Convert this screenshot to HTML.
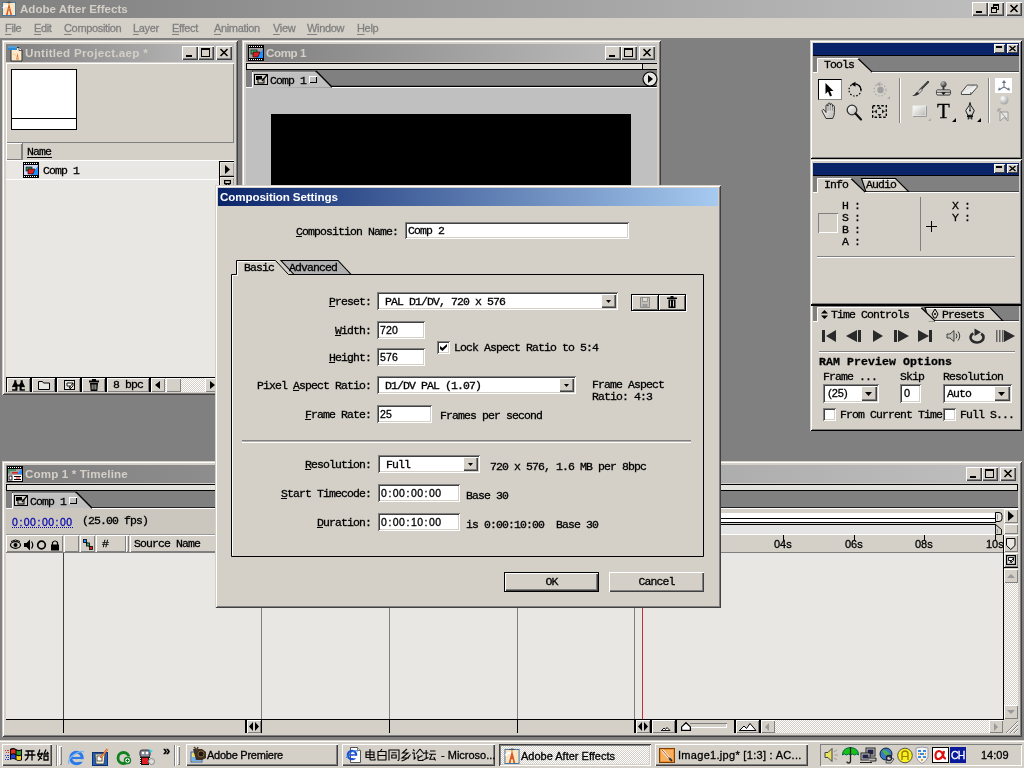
<!DOCTYPE html>
<html><head><meta charset="utf-8">
<style>
*{box-sizing:border-box;margin:0;padding:0}
html,body{width:1026px;height:768px;overflow:hidden;background:#fff}
body{position:relative;font-family:"Liberation Mono",monospace;font-size:11.5px;letter-spacing:-.9px;color:#000;line-height:12px}
#scr{will-change:transform;position:absolute;left:0;top:0;width:1024px;height:768px;background:#808080;overflow:hidden}
.a{position:absolute}
.sans{font-family:"Liberation Sans",sans-serif;letter-spacing:0}
.win{position:absolute;background:#d4d0c8;box-shadow:inset 1px 1px 0 #d4d0c8,inset -1px -1px 0 #404040,inset 2px 2px 0 #fff,inset -2px -2px 0 #808080}
.btn{position:absolute;background:#d4d0c8;box-shadow:inset 1px 1px 0 #fff,inset -1px -1px 0 #404040,inset -2px -2px 0 #808080}
.sunk{position:absolute;background:#fff;box-shadow:inset 1px 1px 0 #808080,inset -1px -1px 0 #fff,inset 2px 2px 0 #404040,inset -2px -2px 0 #d4d0c8}
.tgray{background:linear-gradient(90deg,#808080,#c0c0c0)}
.tblue{background:linear-gradient(90deg,#0a246a,#a6caf0)}
.ttl{position:absolute;font-family:"Liberation Sans",sans-serif;font-weight:bold;font-size:11.6px;letter-spacing:0;color:#d4d0c8;white-space:nowrap;line-height:14px}
.t{position:absolute;white-space:pre;-webkit-text-stroke-width:.3px}
.tc{font-family:"Liberation Sans",sans-serif;font-size:10.5px;letter-spacing:.4px;line-height:13px}
.tc i{font-style:normal;padding:0 1.15px}
u{text-decoration:underline;text-underline-offset:1px}
.cap{position:absolute;width:16px;height:14px;background:#d4d0c8;box-shadow:inset 1px 1px 0 #fff,inset -1px -1px 0 #404040,inset -2px -2px 0 #808080}
svg{position:absolute;overflow:visible}
.pal{box-shadow:inset 1px 1px 0 #d4d0c8,inset -1px -1px 0 #000,inset 2px 2px 0 #fff,inset -2px -2px 0 #808080}
.pcb{position:absolute;top:4px;width:11px;height:9px;background:#d4d0c8;box-shadow:inset 1px 1px 0 #fff,inset -1px -1px 0 #404040}
.hc{top:74px;height:17px;box-shadow:inset 1px 1px 0 #fff,inset -1px -1px 0 #808080}
.vl{top:92px;width:1px;height:166px;background:#808080}
.rl{top:77px;font-size:11px}
.tk{top:74px;width:1px;height:6px;background:#000}
.rb{background:#d4d0c8;box-shadow:inset 1px 1px 0 #fff,inset -1px -1px 0 #808080}
.bb{top:259px;height:13px;background:#d4d0c8;box-shadow:inset 1px 1px 0 #fff,inset -1px -1px 0 #808080}
.mi{top:21px;font-size:11px;color:#808080;line-height:14px;letter-spacing:-.35px}
.mi u{text-underline-offset:1.500px}
.pb{top:338px;height:14px;background:#d4d0c8;box-shadow:inset 1px 1px 0 #fff,inset -1px -1px 0 #808080}
</style></head><body>
<div id="scr">
<!--MAIN-TITLE-->
<div class="a tgray" style="left:0;top:0;width:1024px;height:18px"></div>
<svg style="left:2px;top:1px" width="14" height="15" viewBox="0 0 16 17"><rect x=".5" y="1.500" width="15" height="15" fill="#fbe6c0" stroke="#3a6ea5"/><path d="M1 8q4-5 7-1" stroke="#fff" fill="none" stroke-width="2"/><path d="M8 2.500l3.500 13.500h-2l-.7-4h-1.600l-.7 4h-2z" fill="#d8582a"/><path d="M8 0v3M5 1.500h6" stroke="#444" stroke-width=".8"/><path d="M7.200 9h1.600M6.800 11.500h2.400" stroke="#fbe6c0" stroke-width=".8"/></svg>
<div class="ttl" style="left:20px;top:2px">Adobe After Effects</div>
<div class="cap" style="left:972px;top:2px"><div class="a" style="left:4px;top:9px;width:6px;height:2px;background:#000"></div></div>
<div class="cap" style="left:988px;top:2px"><div class="a" style="left:5px;top:2px;width:6px;height:6px;border:1px solid #000;border-top-width:2px"></div><div class="a" style="left:3px;top:5px;width:6px;height:6px;border:1px solid #000;border-top-width:2px;background:#d4d0c8"></div></div>
<div class="cap" style="left:1006px;top:2px"><svg style="left:4px;top:3px" width="8" height="7" viewBox="0 0 8 7"><path d="M0.5 0l7 7M7.5 0l-7 7" stroke="#000" stroke-width="1.6"/></svg></div>
<!--MENU-->
<div class="a" style="left:0;top:18px;width:1024px;height:20px;background:#d4d0c8"></div>
<div class="t sans mi" style="left:5px"><u>F</u>ile</div><div class="t sans mi" style="left:34px"><u>E</u>dit</div><div class="t sans mi" style="left:64px"><u>C</u>omposition</div><div class="t sans mi" style="left:133px"><u>L</u>ayer</div><div class="t sans mi" style="left:172px"><u>E</u>ffect</div><div class="t sans mi" style="left:214px"><u>A</u>nimation</div><div class="t sans mi" style="left:273px"><u>V</u>iew</div><div class="t sans mi" style="left:307px"><u>W</u>indow</div><div class="t sans mi" style="left:357px"><u>H</u>elp</div>
<!--PROJECT-->
<div class="win" id="proj" style="left:2px;top:40px;width:236px;height:355px">
  <div class="a tgray" style="left:4px;top:4px;width:228px;height:18px"></div>
  <!-- icon -->
  <svg style="left:5px;top:5px" width="17" height="17" viewBox="0 0 17 17"><path d="M4 2.5h8l3 3v10.5h-11z" fill="#fbe9c8" stroke="#333" stroke-width="1"/><path d="M12 2.5v3h3" fill="#fff" stroke="#333" stroke-width=".8"/><rect x="1" y="1.500" width="9" height="3.500" fill="#2a8ad8"/><rect x="1" y="1.500" width="9" height="1" fill="#6bb8f0"/><path d="M10.5 8l1.2 6.5h-2.4z" fill="#d0602a"/><path d="M6 9c2 0 4 2 5 5" stroke="#f0c890" fill="none"/></svg>
  <div class="ttl" style="left:23px;top:6px;letter-spacing:.29px">Untitled Project.aep *</div>
  <div class="cap" style="left:180px;top:6px"><div class="a" style="left:4px;top:9px;width:6px;height:2px;background:#000"></div></div>
  <div class="cap" style="left:196px;top:6px"><div class="a" style="left:3px;top:2px;width:9px;height:9px;border:1px solid #000;border-top-width:2px"></div></div>
  <div class="cap" style="left:214px;top:6px"><svg style="left:4px;top:3px" width="8" height="7" viewBox="0 0 8 7"><path d="M0.5 0l7 7M7.5 0l-7 7" stroke="#000" stroke-width="1.6"/></svg></div>
  <!-- preview panel -->
  <div class="a" style="left:4px;top:23px;width:228px;height:80px;box-shadow:inset 1px 1px 0 #fff,inset -1px -1px 0 #808080"></div>
  <div class="a" style="left:9px;top:29px;width:66px;height:61px;background:#fff;border:1px solid #000"></div>
  <div class="a" style="left:9px;top:78px;width:66px;height:1px;background:#000"></div>
  <!-- header -->
  <div class="a" style="left:4px;top:103px;width:16px;height:17px;box-shadow:inset 1px 1px 0 #fff,inset -1px -1px 0 #808080"></div>
  <div class="a" style="left:20px;top:103px;width:1px;height:17px;background:#808080"></div>
  <div class="t" style="left:25px;top:106px">Name</div>
  <div class="a" style="left:25px;top:117px;width:25px;height:1px;background:#000"></div>
  <!-- list -->
  <div class="a" style="left:4px;top:120px;width:228px;height:217px;background:#e9e7e3"></div>
  <div class="a" style="left:4px;top:120px;width:228px;height:1px;background:#fff"></div>
  <div class="a" style="left:4px;top:139px;width:228px;height:1px;background:#fff"></div>
  <svg style="left:21px;top:122px" width="16" height="16" viewBox="0 0 16 16"><rect width="16" height="16" fill="#000"/><rect x="1" y="3" width="14" height="10" fill="#d8d8f8"/><g fill="#fff"><rect x="1" y="1" width="1" height="1"/><rect x="3" y="1" width="1" height="1"/><rect x="5" y="1" width="1" height="1"/><rect x="7" y="1" width="1" height="1"/><rect x="9" y="1" width="1" height="1"/><rect x="11" y="1" width="1" height="1"/><rect x="13" y="1" width="1" height="1"/><rect x="1" y="14" width="1" height="1"/><rect x="3" y="14" width="1" height="1"/><rect x="5" y="14" width="1" height="1"/><rect x="7" y="14" width="1" height="1"/><rect x="9" y="14" width="1" height="1"/><rect x="11" y="14" width="1" height="1"/><rect x="13" y="14" width="1" height="1"/></g><path d="M15 4v9h-7z" fill="#1e90ff"/><rect x="3" y="5" width="6" height="4" fill="#2e8b57" stroke="#000" stroke-width=".6"/><path d="M5 7h7l-2 5h-5z" fill="#e02020" stroke="#000" stroke-width=".6"/></svg>
  <div class="t" style="left:41px;top:125px">Comp 1</div>
  <!-- right arrow + scroll piece -->
  <div class="a" style="left:217px;top:121px;width:15px;height:30px;background:#000"></div>
  <div class="a" style="left:218px;top:122px;width:14px;height:14px;background:#d4d0c8;box-shadow:inset 1px 1px 0 #ece9e4,inset -1px -1px 0 #a0a0a0"><svg style="left:5px;top:3px" width="5" height="9" viewBox="0 0 5 9"><path d="M0 0l5 4.500l-5 4.500z" fill="#000"/></svg></div>
  <div class="a" style="left:218px;top:137px;width:14px;height:14px;background:#d4d0c8;box-shadow:inset 1px 1px 0 #ece9e4,inset -1px -1px 0 #a0a0a0"><svg style="left:4px;top:3px" width="7" height="6" viewBox="0 0 7 6"><rect x=".6" y=".6" width="5.800" height="3" fill="none" stroke="#000" stroke-width="1.200"/><path d="M1 6l2-2.400M6 6l-2-2.400" stroke="#000" stroke-width="1.200"/></svg></div>
  <!-- bottom toolbar -->
  <div class="a" style="left:4px;top:337px;width:228px;height:15px;background:#000"></div>
  <div class="a pb" style="left:5px;width:23px"><svg style="left:3px;top:2px" width="17" height="11" viewBox="0 0 16 10"><path d="M4 0h2v2l1 2h2l1-2v-2h2v2l2 4v4h-5v-4h-2v4h-5v-4l2-4z" fill="#000"/><rect x="2" y="6.5" width="3" height="2" fill="#d4d0c8"/><rect x="11" y="6.5" width="3" height="2" fill="#d4d0c8"/></svg></div>
  <div class="a pb" style="left:30px;width:23px"><svg style="left:6px;top:3px" width="12" height="9" viewBox="0 0 12 9"><path d="M0.5 8.5v-8h4l1 1.5h6v6.5z" fill="#e8e6e0" stroke="#000"/></svg></div>
  <div class="a pb" style="left:55px;width:23px"><svg style="left:7px;top:2px" width="11" height="10" viewBox="0 0 11 10"><rect x=".5" y=".5" width="10" height="9" fill="#e8e6e0" stroke="#000"/><path d="M3 3h6v3l-3 3v-3h-3z" fill="#fff" stroke="#000" stroke-width=".9"/><path d="M9 3l-4 5" stroke="#000" stroke-width=".9"/></svg></div>
  <div class="a pb" style="left:80px;width:23px"><svg style="left:7px;top:1px" width="10" height="12" viewBox="0 0 10 12"><path d="M3 0h4v1.5h3v2h-10v-2h3z" fill="#000"/><path d="M1 4h8l-.7 8h-6.600z" fill="#000"/><path d="M3.2 5.500v5M5 5.500v5M6.800 5.500v5" stroke="#d4d0c8" stroke-width=".9"/></svg></div>
  <div class="a pb" style="left:105px;width:42px"><div class="t" style="left:6px;top:1px">8 bpc</div></div>
  <div class="a pb" style="left:149px;width:14px"><svg style="left:4px;top:3px" width="5" height="8" viewBox="0 0 5 8"><path d="M5 0v8l-5-4z" fill="#000"/></svg></div>
  <div class="a" style="left:163px;top:338px;width:51px;height:14px;background:#e9e7e3;background-image:conic-gradient(#fff 25%,#d4d0c8 0 50%,#fff 0 75%,#d4d0c8 0);background-size:2px 2px"></div>
  <div class="a pb" style="left:164px;width:15px"></div>
  <div class="a pb" style="left:203px;width:14px"><svg style="left:5px;top:3px" width="5" height="8" viewBox="0 0 5 8"><path d="M0 0v8l5-4z" fill="#000"/></svg></div>
</div>
<!--COMP-->
<div class="win" id="comp" style="left:242px;top:40px;width:419px;height:300px">
  <div class="a tgray" style="left:4px;top:4px;width:411px;height:18px"></div>
  <svg style="left:6px;top:5px" width="16" height="16" viewBox="0 0 16 16"><rect width="16" height="16" fill="#000"/><rect x="1" y="3" width="14" height="10" fill="#a0a0a0"/><g fill="#fff"><rect x="1" y="1" width="1" height="1"/><rect x="3" y="1" width="1" height="1"/><rect x="5" y="1" width="1" height="1"/><rect x="7" y="1" width="1" height="1"/><rect x="9" y="1" width="1" height="1"/><rect x="11" y="1" width="1" height="1"/><rect x="13" y="1" width="1" height="1"/><rect x="1" y="14" width="1" height="1"/><rect x="3" y="14" width="1" height="1"/><rect x="5" y="14" width="1" height="1"/><rect x="7" y="14" width="1" height="1"/><rect x="9" y="14" width="1" height="1"/><rect x="11" y="14" width="1" height="1"/><rect x="13" y="14" width="1" height="1"/></g><path d="M15 4v9h-7z" fill="#1e90ff"/><rect x="3" y="5" width="6" height="4" fill="#3cb371" stroke="#000" stroke-width=".6"/><path d="M5 7h7l-2 5h-5z" fill="#e02020" stroke="#000" stroke-width=".6"/></svg>
  <div class="ttl" style="left:24px;top:6px;letter-spacing:-.4px">Comp 1</div>
  <div class="cap" style="left:363px;top:6px"><div class="a" style="left:4px;top:9px;width:6px;height:2px;background:#000"></div></div>
  <div class="cap" style="left:379px;top:6px"><div class="a" style="left:3px;top:2px;width:9px;height:9px;border:1px solid #000;border-top-width:2px"></div></div>
  <div class="cap" style="left:397px;top:6px"><svg style="left:4px;top:3px" width="8" height="7" viewBox="0 0 8 7"><path d="M0.5 0l7 7M7.5 0l-7 7" stroke="#000" stroke-width="1.6"/></svg></div>
  <!-- strip -->
  <div class="a" style="left:4px;top:23px;width:411px;height:7px;background:linear-gradient(90deg,#e4e2dc 395px,#000 395px 396px,#d4d0c8 396px);border:1px solid #000;border-right:0"></div>
  <!-- tab row -->
  <div class="a" style="left:4px;top:30px;width:411px;height:18px;background:#808080"></div>
  <div class="a" style="left:4px;top:48px;width:411px;height:252px;background:#c0c0c0"></div>
  <svg style="left:4px;top:30px" width="411" height="18" viewBox="0 0 411 18"><path d="M6.5 18v-16.500h64l15 16z" fill="#c0c0c0"/><path d="M6 1.500h64.500l15 15h325" stroke="#000" fill="none" stroke-width="1.300"/><path d="M0 17.500h6.500v-15.500h63" stroke="#fff" fill="none"/><path d="M86 17.500h325" stroke="#fff"/></svg>
  <svg style="left:12px;top:34px" width="14" height="11" viewBox="0 0 14 11"><rect x=".5" y=".5" width="13" height="10" fill="#d4d0c8" stroke="#000"/><rect x="2" y="2" width="6" height="4" fill="#000"/><rect x="4" y="5" width="6" height="4" fill="#d4d0c8" stroke="#000" stroke-width="1"/><path d="M13 1l-5 6" stroke="#000" stroke-width="1.2"/></svg>
  <div class="t" style="left:28px;top:35px">Comp 1</div>
  <div class="a" style="left:67px;top:36px;width:8px;height:7px;background:#c0c0c0;box-shadow:inset 1px 1px 0 #fff,inset -1px -1px 0 #000"></div>
  <svg style="left:400px;top:31px" width="16" height="16" viewBox="0 0 16 16"><circle cx="8" cy="8" r="7" fill="#e8e6e2" stroke="#000" stroke-width="1.200"/><path d="M6 4l5 4l-5 4z" fill="#000"/></svg>
  <!-- black comp -->
  <div class="a" style="left:29px;top:74px;width:360px;height:226px;background:#000"></div>
</div>
<!--TOOLS-->
<svg width="0" height="0" style="left:0;top:0"><defs>
<linearGradient id="gw" x1="0" y1="0" x2="1" y2="1"><stop offset="0" stop-color="#fff"/><stop offset="1" stop-color="#b8b6b0"/></linearGradient>
<filter id="blr" x="-10%" y="-20%" width="120%" height="140%"><feGaussianBlur stdDeviation=".45"/></filter>
<radialGradient id="gb" cx=".35" cy=".3" r=".8"><stop offset="0" stop-color="#fff"/><stop offset="1" stop-color="#999"/></radialGradient>
<radialGradient id="gk" cx=".35" cy=".3" r=".8"><stop offset="0" stop-color="#bbb"/><stop offset="1" stop-color="#222"/></radialGradient>
</defs></svg>
<div class="win pal" id="tools" style="left:810px;top:40px;width:212px;height:119px">
  <div class="a" style="left:3px;top:3px;width:206px;height:12px;background:#0a246a"></div>
  <div class="pcb" style="left:184px"><div class="a" style="left:2px;top:2px;width:6px;height:2px;background:#000"></div></div>
  <div class="pcb" style="left:197px"><svg style="left:2px;top:2px" width="7" height="5" viewBox="0 0 7 5"><path d="M0.500 0l6 5M6.500 0l-6 5" stroke="#000" stroke-width="1.500"/></svg></div>
  <div class="a" style="left:3px;top:15px;width:206px;height:17px;background:#808080;border-top:1px solid #000"></div>
  <svg style="left:3px;top:16px" width="206" height="17" viewBox="0 0 206 17"><path d="M4.500 17v-14.500h41l14 14z" fill="#d4d0c8"/><path d="M45 2.500l14 13.500h147" stroke="#000" fill="none" stroke-width="1.200"/><path d="M0 16.500h4.500v-14h41" stroke="#fff" fill="none"/><path d="M59 16.500h147" stroke="#fff"/></svg>
  <div class="t" style="left:14px;top:19px">Tools</div>
  <!-- selection -->
  <div class="a" style="left:8px;top:39px;width:24px;height:21px;background:#fff;border:1px solid #000;border-right-color:#888;border-bottom-color:#888"></div>
  <svg style="left:15px;top:43px" width="10" height="14" viewBox="0 0 10 14"><path d="M0.500 0v11l2.500-2.500l2 5l2-1l-2-4.500h3.500z" fill="#000"/></svg>
  <!-- rotate -->
  <svg style="left:37px;top:41px" width="16" height="16" viewBox="0 0 16 16"><circle cx="8" cy="9" r="6" fill="none" stroke="#000" stroke-width="1.200" stroke-dasharray="1.500 1.700"/><path d="M8 3a6 6 0 0 1 6 6" stroke="#000" fill="none" stroke-width="1.200"/><path d="M4 3.200l4.500-2.500v5z" fill="#000"/></svg>
  <!-- orbit (disabled) -->
  <svg style="left:62px;top:41px" width="16" height="16" viewBox="0 0 16 16"><circle cx="8" cy="9" r="6" fill="none" stroke="#aaa" stroke-width="1.200" stroke-dasharray="1.500 1.700"/><circle cx="8.500" cy="9" r="3.200" fill="#a0a0a0"/><path d="M4 3.200l4.500-2.500v5z" fill="#aaa"/><path d="M80 59v-3l-3 3z" fill="#aaa" transform="translate(-62,-41)"/></svg>
  <!-- hand -->
  <svg style="left:11px;top:62px" width="17" height="17" viewBox="0 0 17 17"><path d="M5 16.500l-3.500-6.500q-1-2 .5-2.500q1-.3 2 1.500l1 1.500v-6.500q0-1.300 1-1.300t1 1.300v-1.700q0-1.300 1.100-1.300t1.100 1.300v.7q0-1.300 1.100-1.300t1.100 1.300v1.700q0-1.200 1-1.200t1 1.200v5.800q0 3-1.700 6z" fill="url(#gw)" stroke="#222" stroke-width=".9"/><path d="M7 4v4.500M9.200 3v5.500M11.400 4v4.500" stroke="#666" stroke-width=".7"/></svg>
  <!-- zoom -->
  <svg style="left:36px;top:64px" width="17" height="17" viewBox="0 0 17 17"><circle cx="6" cy="6" r="4.800" fill="url(#gw)" stroke="#333" stroke-width="1.300"/><path d="M9.500 9.500l5.500 6" stroke="#111" stroke-width="2.200" stroke-linecap="round"/></svg>
  <!-- pan behind -->
  <svg style="left:62px;top:65px" width="15" height="13" viewBox="0 0 15 13"><rect x=".7" y=".7" width="13.600" height="11.600" fill="none" stroke="#000" stroke-width="1.400" stroke-dasharray="2.500 1.800"/><path d="M7.500 1.500l2 2.500h-4zM7.500 11.500l2-2.500h-4zM2 6.500l3-2v4zM13 6.500l-3-2v4z" fill="#222"/></svg>
  <!-- separators -->
  <div class="a" style="left:89px;top:38px;width:2px;height:45px;background:#808080;border-right:1px solid #fff"></div>
  <div class="a" style="left:178px;top:38px;width:2px;height:45px;background:#808080;border-right:1px solid #fff"></div>
  <!-- brush -->
  <svg style="left:101px;top:41px" width="18" height="16" viewBox="0 0 18 16"><path d="M17 1l-7.500 7.500" stroke="#2a2a2a" stroke-width="2.200" stroke-linecap="round"/><path d="M16.500 1l-7 7" stroke="#888" stroke-width=".6"/><path d="M10 7.500l1.500 1.500l-4 4l-2.500-.5z" fill="#d8d6d0" stroke="#444" stroke-width=".8"/><path d="M6 11q2 .5 2 2q-3 2.500-7 2q2.500-1 5-4z" fill="#2a2a2a"/></svg>
  <!-- stamp -->
  <svg style="left:126px;top:40px" width="15" height="17" viewBox="0 0 16 17"><circle cx="8" cy="4" r="3.200" fill="url(#gk)"/><rect x="7" y="6" width="2" height="4" fill="#333"/><path d="M1.500 10h13c1 0 1 1 1 1.500v2.500c0 1-1 1.500-1.500 1.500h-12c-1 0-1.500-.500-1.500-1.500v-2.500c0-1 .5-1.500 1-1.500z" fill="url(#gw)" stroke="#333" stroke-width="1"/><path d="M1 12.500h14" stroke="#333"/><path d="M5.500 12.500h5l-2.500 3z" fill="#111"/></svg>
  <!-- eraser -->
  <svg style="left:151px;top:44px" width="17" height="12" viewBox="0 0 19 13"><path d="M7 1h11l-7 8h-10.500z" fill="url(#gw)" stroke="#333" stroke-width="1"/><path d="M.5 9v2.500h10.500l7-8v-2.500" fill="#eee" stroke="#333" stroke-width="1"/><path d="M11 9v2.500" stroke="#333"/></svg>
  <!-- rect -->
  <svg style="left:102px;top:65px" width="22" height="19" viewBox="0 0 22 19"><rect x="1" y="1" width="13" height="10" fill="url(#gw)" stroke="#eee" stroke-width="1"/><path d="M14.500 1v10.500h-13.500" stroke="#999" fill="none"/><path d="M19 16v-3l-3 3z" fill="#aaa"/></svg>
  <!-- T -->
  <div class="t" style="left:127px;top:60px;font:21px/22px 'Liberation Serif',serif;letter-spacing:0">T</div>
  <svg style="left:142px;top:78px" width="4" height="4" viewBox="0 0 4 4"><path d="M4 0v4h-4z" fill="#000"/></svg>
  <!-- pen -->
  <svg style="left:154px;top:62px" width="12" height="18" viewBox="0 0 14 20"><path d="M7 0l1 3.500l4 6l-2.500 5.500h-5l-2.500-5.500l4-6z" fill="url(#gw)" stroke="#111" stroke-width="1.100"/><path d="M7 3v6" stroke="#111"/><circle cx="7" cy="9.500" r="1.100" fill="#111"/><rect x="3.500" y="15" width="7" height="2" fill="#111"/><path d="M5 17v3M9 17v3M7 17v2" stroke="#111" stroke-width="1.300"/></svg>
  <svg style="left:167px;top:78px" width="4" height="4" viewBox="0 0 4 4"><path d="M4 0v4h-4z" fill="#000"/></svg>
  <!-- right column -->
  <div class="a" style="left:185px;top:38px;width:17px;height:15px;background:#fff"></div>
  <svg style="left:188px;top:40px" width="12" height="12" viewBox="0 0 12 12"><path d="M6 1.500v5.500M6 7l-4.500 2.500M6 7l4.500 2.500" stroke="#6a7488" fill="none" stroke-width="1.100"/><path d="M6 0l-2.200 3h4.400zM0 10.500l1-3.200l2 2.600zM12 10.500l-1-3.200l-2 2.600z" fill="#6a7488"/></svg>
  <svg style="left:189px;top:55px" width="10" height="10" viewBox="0 0 10 10"><circle cx="5" cy="5" r="4.500" fill="url(#gb)"/></svg>
  <svg style="left:188px;top:69px" width="11" height="12" viewBox="0 0 11 12"><path d="M2 3h8v9l-4-3.500l-4 3.500z" fill="#e8e6e2" stroke="#999" stroke-width="1"/><path d="M0 0h3M0 0v3M1 1l8 9" stroke="#999" stroke-width="1"/></svg>
</div>
<!--INFO-->
<div class="win pal" id="info" style="left:810px;top:159px;width:212px;height:146px">
  <div class="a" style="left:3px;top:4px;width:206px;height:12px;background:#0a246a"></div>
  <div class="pcb" style="left:184px;top:5px"><div class="a" style="left:2px;top:2px;width:6px;height:2px;background:#000"></div></div>
  <div class="pcb" style="left:197px;top:5px"><svg style="left:2px;top:2px" width="7" height="5" viewBox="0 0 7 5"><path d="M0.500 0l6 5M6.500 0l-6 5" stroke="#000" stroke-width="1.500"/></svg></div>
  <div class="a" style="left:3px;top:16px;width:206px;height:17px;background:#808080;border-top:1px solid #000"></div>
  <svg style="left:3px;top:17px" width="206" height="17" viewBox="0 0 206 17"><path d="M48.500 2.500h34l13.500 13.500h-43z" fill="#d4d0c8" stroke="#000" stroke-width="1.100"/><path d="M50 3.500h32" stroke="#fff"/><path d="M4.500 17v-14.500h34l14 14z" fill="#d4d0c8"/><path d="M38 2.500l14 13.500h154" stroke="#000" fill="none" stroke-width="1.200"/><path d="M0 16.500h4.500v-14h34" stroke="#fff" fill="none"/><path d="M52 16.500h154" stroke="#fff"/></svg>
  <div class="t" style="left:14px;top:20px">Info</div>
  <div class="t" style="left:56px;top:20px">Audio</div>
  <div class="a" style="left:8px;top:54px;width:20px;height:20px;box-shadow:inset 1px 1px 0 #808080,inset -1px -1px 0 #fff"></div>
  <div class="t" style="left:32px;top:41px;line-height:12px;white-space:pre">H :<br>S :<br>B :<br>A :</div>
  <div class="a" style="left:110px;top:38px;width:1px;height:54px;background:#808080"></div>
  <div class="a" style="left:116px;top:67px;width:11px;height:1px;background:#000"></div>
  <div class="a" style="left:121px;top:62px;width:1px;height:11px;background:#000"></div>
  <div class="t" style="left:142px;top:41px;line-height:12px;white-space:pre">X :<br>Y :</div>
  <div class="a" style="left:7px;top:97px;width:198px;height:2px;background:#808080;border-bottom:1px solid #fff"></div>
</div>
<!--TIMECTL-->
<div class="win pal" id="tc" style="left:810px;top:304px;width:212px;height:127px;box-shadow:inset 1px 0 0 #d4d0c8,inset 0 2px 0 #000,inset -1px -1px 0 #000,inset 2px 0 0 #fff,inset -2px -2px 0 #808080">
  <div class="a" style="left:3px;top:2px;width:206px;height:15px;background:#808080"></div>
  <svg style="left:3px;top:1px" width="206" height="17" viewBox="0 0 206 17"><path d="M112 2.500h65l13 13.500h-74z" fill="#d4d0c8" stroke="#000" stroke-width="1.100"/><path d="M114 3.500h63" stroke="#fff"/><path d="M4.500 17v-14.500h104l14 14z" fill="#d4d0c8"/><path d="M108 2.500l14 13.500h84" stroke="#000" fill="none" stroke-width="1.200"/><path d="M0 16.500h4.500v-14h104" stroke="#fff" fill="none"/><path d="M122 16.500h84" stroke="#fff"/></svg>
  <svg style="left:11px;top:6px" width="7" height="9" viewBox="0 0 7 9"><path d="M0 3.500h7l-3.500-3.500zM0 5.500h7l-3.500 3.500z" fill="#000"/></svg>
  <div class="t" style="left:21px;top:5px">Time Controls</div>
  <svg style="left:121px;top:5px" width="8" height="10" viewBox="0 0 8 10"><path d="M4 0l3 5l-2 4h-2l-2-4z" fill="none" stroke="#000" stroke-width="1"/><circle cx="4" cy="5" r="1" fill="#000"/></svg>
  <div class="t" style="left:132px;top:5px">Presets</div>
  <!-- transport -->
  <svg style="left:12px;top:26px" width="195" height="13" viewBox="0 0 195 13" fill="#2a2a2a"><g filter="url(#blr)"><rect x="0" y="0" width="3" height="12"/><path d="M14 0v12l-10-6z"/><path d="M35 0v12l-11-6z"/><rect x="36" y="0" width="3" height="12"/><path d="M51 0v12l10-6z"/><rect x="72" y="0" width="3" height="12"/><path d="M76 0v12l11-6z"/><path d="M96 0v12l11-6z"/><rect x="107" y="0" width="3" height="12"/><g fill="#666"><rect x="174" y="0" width="1.500" height="12"/><rect x="177" y="0" width="1.500" height="12"/><rect x="180" y="0" width="1.500" height="12"/></g><path d="M182 0v12l11-6z"/></g><path d="M125 4h3l4-3.500v11l-4-3.500h-3z" fill="#c4c0b8" stroke="#333" stroke-width=".9"/><path d="M134 3.500q2 2.500 0 5M136 1.500q3.500 4.500 0 9" stroke="#333" fill="none" stroke-width="1"/><g filter="url(#blr)"><path d="M159.200 3.670A6.500 5 0 1 1 151.300 3.400" stroke="#2a2a2a" fill="none" stroke-width="2.600"/><path d="M152.500 -1.500v7.500l6.500-3.700z" fill="#2a2a2a"/></g></svg>
  <div class="a" style="left:9px;top:47px;width:196px;height:1px;background:#808080;border-bottom:1px solid #fff;height:2px"></div>
  <div class="t" style="left:9px;top:52px;font-weight:bold;letter-spacing:.1px">RAM Preview Options</div>
  <div class="t" style="left:13px;top:67px">Frame ...</div>
  <div class="t" style="left:90px;top:67px">Skip</div>
  <div class="t" style="left:133px;top:67px">Resolution</div>
  <div class="sunk" style="left:13px;top:80px;width:56px;height:19px"><div class="t sans" style="left:5px;top:3px;font-size:11px">(25)</div><div class="btn" style="left:38px;top:2px;width:16px;height:15px"><svg style="left:4px;top:6px" width="7" height="4" viewBox="0 0 7 4"><path d="M0 0h7l-3.500 4z" fill="#000"/></svg></div></div>
  <div class="sunk" style="left:90px;top:80px;width:21px;height:19px"><div class="t sans" style="left:4px;top:3px;font-size:11px">0</div></div>
  <div class="sunk" style="left:133px;top:80px;width:69px;height:19px"><div class="t" style="left:4px;top:4px">Auto</div><div class="btn" style="left:51px;top:2px;width:16px;height:15px"><svg style="left:4px;top:6px" width="7" height="4" viewBox="0 0 7 4"><path d="M0 0h7l-3.500 4z" fill="#000"/></svg></div></div>
  <div class="sunk" style="left:13px;top:104px;width:13px;height:13px"></div>
  <div class="t" style="left:30px;top:105px">From Current Time</div>
  <div class="sunk" style="left:133px;top:104px;width:13px;height:13px"></div>
  <div class="t" style="left:150px;top:105px">Full S...</div>
</div>
<!--TIMELINE-->
<div class="win" id="tl" style="left:2px;top:461px;width:1020px;height:276px">
  <div class="a tgray" style="left:4px;top:4px;width:1012px;height:18px"></div>
  <svg style="left:5px;top:5px" width="16" height="16" viewBox="0 0 16 16"><rect width="16" height="16" fill="#000"/><g fill="#fff"><rect x="1" y="1" width="1" height="1"/><rect x="3" y="1" width="1" height="1"/><rect x="5" y="1" width="1" height="1"/><rect x="7" y="1" width="1" height="1"/><rect x="9" y="1" width="1" height="1"/><rect x="11" y="1" width="1" height="1"/><rect x="13" y="1" width="1" height="1"/></g><rect x="1" y="3" width="14" height="6" fill="#a0a0a0"/><path d="M15 3v5h-5z" fill="#1e90ff"/><path d="M2 7v-3h7" stroke="#2e8b57" fill="none" stroke-width="1.300"/><rect x="5" y="6" width="6" height="1.500" fill="#e02020"/><rect x="1" y="9" width="14" height="6" fill="#fff"/><rect x="2" y="10" width="3" height="4" fill="none" stroke="#000" stroke-width=".9"/><path d="M7 10.500h7M7 13.500h7" stroke="#000"/><path d="M9 12h4" stroke="#e02020"/></svg>
  <div class="ttl" style="left:23px;top:6px;letter-spacing:.15px">Comp 1 * Timeline</div>
  <div class="cap" style="left:964px;top:6px"><div class="a" style="left:4px;top:9px;width:6px;height:2px;background:#000"></div></div>
  <div class="cap" style="left:980px;top:6px"><div class="a" style="left:3px;top:2px;width:9px;height:9px;border:1px solid #000;border-top-width:2px"></div></div>
  <div class="cap" style="left:998px;top:6px"><svg style="left:4px;top:3px" width="8" height="7" viewBox="0 0 8 7"><path d="M0.5 0l7 7M7.5 0l-7 7" stroke="#000" stroke-width="1.6"/></svg></div>
  <!-- strip -->
  <div class="a" style="left:4px;top:23px;width:1012px;height:7px;background:#e4e2dc;border:1px solid #000"></div>
  <!-- tab row -->
  <div class="a" style="left:4px;top:30px;width:1012px;height:17px;background:#808080"></div>
  <svg style="left:4px;top:30px" width="1012" height="18" viewBox="0 0 1012 18"><path d="M6.5 18v-16.500h64l15 16z" fill="#c0c0c0"/><path d="M6 1.500h64.500l15.500 15.500h926" stroke="#000" fill="none" stroke-width="1.300"/><path d="M0 17.500h6.500v-15.500h63" stroke="#fff" fill="none"/><path d="M86 17.500h926" stroke="#fff"/></svg>
  <svg style="left:12px;top:34px" width="14" height="11" viewBox="0 0 14 11"><rect x=".5" y=".5" width="13" height="10" fill="#d4d0c8" stroke="#000"/><rect x="2" y="2" width="6" height="4" fill="#000"/><rect x="4" y="5" width="6" height="4" fill="#d4d0c8" stroke="#000" stroke-width="1"/><path d="M13 1l-5 6" stroke="#000" stroke-width="1.2"/></svg>
  <div class="t" style="left:28px;top:35px">Comp 1</div>
  <div class="a" style="left:67px;top:36px;width:8px;height:7px;background:#c0c0c0;box-shadow:inset 1px 1px 0 #fff,inset -1px -1px 0 #000"></div>
  <!-- timecode row -->
  <div class="a" style="left:4px;top:48px;width:628px;height:26px;background:#cbc7bf;border-bottom:1px solid #9a9a9a"></div>
  <div class="t tc" style="left:10px;top:55px;color:#0a0ab0">0<i>:</i>00<i>:</i>00<i>:</i>00</div>
  <div class="a" style="left:10px;top:66px;width:61px;height:1px;background-image:linear-gradient(90deg,#0a0ab0 50%,transparent 0);background-size:2px 1px"></div>
  <div class="t" style="left:80px;top:54px">(25.00 fps)</div>
  <!-- header row -->
  <div class="a" style="left:4px;top:74px;width:1012px;height:18px;background:#d4d0c8"></div>
  <div class="a hc" style="left:4px;width:57px"></div>
  <div class="a hc" style="left:62px;width:15px"></div>
  <div class="a hc" style="left:78px;width:15px"></div>
  <div class="a hc" style="left:94px;width:30px"></div>
  <div class="a hc" style="left:124px;width:3px"></div>
  <div class="a hc" style="left:128px;width:500px"></div>
  <svg style="left:8px;top:78px" width="50" height="12" viewBox="0 0 50 12"><ellipse cx="5.500" cy="6" rx="5" ry="3.300" fill="none" stroke="#000" stroke-width="1.200"/><circle cx="5.500" cy="6" r="2" fill="#000"/><path d="M1 2.500q4.500-3 9 0" stroke="#000" fill="none"/><path d="M14 4h2.500l3.500-3.500v11l-3.500-3.500h-2.500z" fill="#000"/><path d="M21.500 2.500q2.500 3.500 0 7" stroke="#000" fill="none" stroke-width="1.200"/><circle cx="31.500" cy="6" r="3.800" fill="none" stroke="#000" stroke-width="1.700"/><rect x="41" y="5.500" width="8" height="6" fill="#000"/><path d="M42.500 6v-2.500q2.500-3 5 0v2.500" stroke="#000" fill="none" stroke-width="1.200"/></svg>
  <svg style="left:81px;top:78px" width="10" height="11" viewBox="0 0 10 11"><path d="M2 2l3 3.500l3 3.500" stroke="#000" stroke-width="1.300" fill="none"/><rect x=".5" y=".5" width="3" height="3" fill="#1e90ff" stroke="#000" stroke-width=".8"/><rect x="3.500" y="4" width="3" height="3" fill="#3cb371" stroke="#000" stroke-width=".8"/><rect x="6.500" y="7.500" width="3" height="3" fill="#e02020" stroke="#000" stroke-width=".8"/></svg>
  <div class="t" style="left:100px;top:77px">#</div>
  <div class="t" style="left:132px;top:77px">Source Name</div>
  <!-- body -->
  <div class="a" style="left:4px;top:92px;width:998px;height:166px;background:#e9e7e3"></div>
  <div class="a" style="left:61px;top:92px;width:1px;height:180px;background:#404040"></div>
  <div class="a vl" style="left:259px"></div><div class="a vl" style="left:387px"></div><div class="a vl" style="left:515px"></div><div class="a vl" style="left:632px"></div>
  <div class="a" style="left:640px;top:92px;width:1px;height:166px;background:#c83030"></div>
  <!-- time nav (right of dialog) -->
  <div class="a" style="left:632px;top:48px;width:370px;height:26px;background:#d4d0c8"></div>
  <div class="a" style="left:632px;top:52px;width:362px;height:6px;background:#fff;border-bottom:1px solid #000"></div>
  <div class="a" style="left:632px;top:58px;width:362px;height:4px;background:#fff;border-bottom:1px solid #000"></div>
  <div class="a" style="left:632px;top:63px;width:362px;height:11px;background:#e4e4e4;border-top:1px solid #000;border-bottom:1px solid #fff"></div>
  <svg style="left:993px;top:51px" width="8" height="23" viewBox="0 0 8 23"><path d="M.5 .5h3.500q3 0 3 3v3q0 3-3 3h-3.500z" fill="#e8e6e2" stroke="#000"/><path d="M2.500 2.500v5" stroke="#999"/><path d="M.5 12.500l6 5v5h-6z" fill="#d4d0c8" stroke="#000" stroke-width=".9"/><path d="M2.500 17v4" stroke="#999"/></svg>
  <div class="a" style="left:4px;top:91px;width:998px;height:1px;background:#808080"></div>
  <!-- ruler labels -->
  <div class="a" style="left:632px;top:74px;width:370px;height:17px;background:#d4d0c8"></div>
  <div class="t sans rl" style="left:772px">04s</div><div class="a tk" style="left:781px"></div>
  <div class="t sans rl" style="left:843px">06s</div><div class="a tk" style="left:852px"></div>
  <div class="t sans rl" style="left:913px">08s</div><div class="a tk" style="left:922px"></div>
  <div class="t sans rl" style="left:984px">10s</div><div class="a tk" style="left:993px"></div>
  <!-- right column -->
  <div class="a" style="left:1001px;top:48px;width:15px;height:60px;background:#d4d0c8"></div>
  <div class="a" style="left:1002px;top:108px;width:14px;height:150px;background-color:#fff;background-image:conic-gradient(#fff 25%,#d4d0c8 0 50%,#fff 0 75%,#d4d0c8 0);background-size:2px 2px"></div>
  <div class="a" style="left:1001px;top:74px;width:1px;height:184px;background:#000"></div>
  <div class="a rb" style="left:1002px;top:48px;width:14px;height:14px"><svg style="left:4px;top:2px" width="6" height="10" viewBox="0 0 6 10"><path d="M0 0v10l6-5z" fill="#000"/></svg></div>
  <div class="a rb" style="left:1002px;top:63px;width:14px;height:10px"></div>
  <div class="a rb" style="left:1002px;top:74px;width:14px;height:17px"><svg style="left:2px;top:3px" width="10" height="12" viewBox="0 0 10 12"><path d="M.5 .5h8.500v7l-4.250 4l-4.250-4z" fill="#e8e6e2" stroke="#000" stroke-width="1"/></svg></div>
  <div class="a rb" style="left:1002px;top:92px;width:14px;height:15px;border-bottom:1px solid #000"><svg style="left:2px;top:2px" width="10" height="10" viewBox="0 0 10 10"><rect x=".6" y=".6" width="8.800" height="8.800" fill="#e8e6e2" stroke="#000" stroke-width="1.200"/><path d="M2.500 2.500h5v3l-2.500 2.500v-2.500h-2.500z" fill="#fff" stroke="#000" stroke-width=".9"/><path d="M8 2.500l-4 5" stroke="#000"/></svg></div>
  <div class="a rb" style="left:1002px;top:108px;width:14px;height:14px"><svg style="left:3px;top:5px" width="8" height="4" viewBox="0 0 8 4"><path d="M0 4h8l-4-4z" fill="#999"/></svg></div>
  <div class="a rb" style="left:1002px;top:244px;width:14px;height:14px"><svg style="left:3px;top:5px" width="8" height="4" viewBox="0 0 8 4"><path d="M0 0h8l-4 4z" fill="#999"/></svg></div>
  <!-- bottom bar -->
  <div class="a" style="left:4px;top:258px;width:998px;height:1px;background:#000"></div>
  <div class="a" style="left:4px;top:259px;width:998px;height:13px;background:#d4d0c8"></div>
  <div class="a" style="left:61px;top:259px;width:1px;height:13px;background:#000"></div>
  <div class="a bb" style="left:243px;width:2px;background:#000;box-shadow:none"></div>
  <div class="a bb" style="left:245px;width:14px"><svg style="left:2px;top:2px" width="10" height="9" viewBox="0 0 10 9"><path d="M4 0v9l-4-4.500zM6 0v9l4-4.500z" fill="#000"/></svg></div>
  <div class="a" style="left:259px;top:259px;width:1px;height:13px;background:#000"></div>
  <div class="a" style="left:387px;top:259px;width:1px;height:13px;background:#000"></div>
  <div class="a" style="left:515px;top:259px;width:1px;height:13px;background:#000"></div>
  <div class="a bb" style="left:632px;width:2px;background:#000;box-shadow:none"></div>
  <div class="a bb" style="left:634px;width:14px"><svg style="left:2px;top:2px" width="10" height="9" viewBox="0 0 10 9"><path d="M4 0v9l-4-4.500zM6 0v9l4-4.500z" fill="#000"/></svg></div>
  <div class="a bb" style="left:648px;width:2px;background:#000;box-shadow:none"></div>
  <div class="a bb" style="left:650px;width:23px"><svg style="left:9px;top:7px" width="9" height="4" viewBox="0 0 9 4"><path d="M0 3.500h9M.5 3.500l2.500-2.500l1.500 1.500l1.500-2l3 3" fill="#fff" stroke="#000" stroke-width=".9"/></svg></div>
  <div class="a bb" style="left:673px;width:2px;background:#000;box-shadow:none"></div>
  <div class="a" style="left:688px;top:262px;width:37px;height:5px;box-shadow:inset 0 1px 0 #808080,inset 0 -1px 0 #fff,inset -1px 0 0 #fff"></div>
  <svg style="left:679px;top:261px" width="10" height="9" viewBox="0 0 10 9"><path d="M.6 8.400v-3.500l4.400-4.200l4.400 4.200v3.500z" fill="#fff" stroke="#000" stroke-width="1.200"/></svg>
  <div class="a bb" style="left:732px;width:2px;background:#000;box-shadow:none"></div>
  <div class="a bb" style="left:734px;width:23px"><svg style="left:3px;top:3px" width="17" height="8" viewBox="0 0 17 8"><path d="M0 7.500h17M.5 7.500l4.500-4.500l2.500 2.500l3.500-5l6 7" fill="#fff" stroke="#000" stroke-width="1"/></svg></div>
  <div class="a bb" style="left:757px;width:2px;background:#000;box-shadow:none"></div>
  <div class="a" style="left:759px;top:259px;width:242px;height:13px;background-color:#fff;background-image:conic-gradient(#fff 25%,#d4d0c8 0 50%,#fff 0 75%,#d4d0c8 0);background-size:2px 2px"></div>
  <div class="a bb" style="left:759px;width:14px"><svg style="left:4px;top:3px" width="4" height="8" viewBox="0 0 4 8"><path d="M4 0v8l-4-4z" fill="#999"/></svg></div>
  <div class="a bb" style="left:987px;width:14px"><svg style="left:5px;top:3px" width="4" height="8" viewBox="0 0 4 8"><path d="M0 0v8l4-4z" fill="#999"/></svg></div>
  <div class="a" style="left:1002px;top:259px;width:14px;height:13px;background:#d4d0c8"></div>
  <svg style="left:1003px;top:259px" width="13" height="13" viewBox="0 0 13 13"><path d="M13 1l-12 12M13 5l-8 8M13 9l-4 4" stroke="#808080"/><path d="M13 2l-11 11M13 6l-7 7M13 10l-3 3" stroke="#fff"/></svg>
</div>
<!--DIALOG-->
<div class="win" id="dlg" style="left:215px;top:185px;width:506px;height:423px">
  <div class="a tblue" style="left:3px;top:3px;width:500px;height:18px"></div>
  <div class="ttl" style="left:5px;top:5px;color:#fff;letter-spacing:-.1px">Composition Settings</div>
  <div class="t" style="right:323px;top:41px"><u>C</u>omposition Name:</div>
  <div class="sunk" style="left:190px;top:37px;width:224px;height:17px"><div class="t" style="left:3px;top:3px">Comp 2</div></div>
  <!-- tabs + panel -->
  <svg style="left:16px;top:74px" width="473" height="298" viewBox="0 0 473 298"><path d="M50 1.500h57l13 14h-57z" fill="#b0b0b0" stroke="#000" stroke-width="1.100"/><path d="M.5 297.500v-282h5v-14h39l13 14h415v282z" fill="#d4d0c8" stroke="#000" stroke-width="1"/><path d="M1.500 296.500v-280h5v-14h37.500" stroke="#fff" fill="none"/></svg>
  <div class="t" style="left:29px;top:77px">Basic</div>
  <div class="t" style="left:74px;top:77px">Advanced</div>
  <div class="t" style="right:350px;top:111px"><u>P</u>reset:</div>
  <div class="sunk" style="left:162px;top:107px;width:241px;height:18px"><div class="t" style="left:8px;top:4px">PAL D1/DV, 720 x 576</div><div class="btn" style="left:224px;top:2px;width:15px;height:14px"><svg style="left:5px;top:6px" width="5" height="3" viewBox="0 0 5 3"><path d="M0 0h5l-2.500 3z" fill="#000"/></svg></div></div>
  <div class="a" style="left:416px;top:109px;width:55px;height:17px;background:#000;box-shadow:1px 1px 0 #fff"></div>
  <div class="a" style="left:417px;top:110px;width:26px;height:15px;background:#d4d0c8;box-shadow:inset 1px 1px 0 #fff,inset -1px -1px 0 #606060"><svg style="left:8px;top:2px" width="10" height="11" viewBox="0 0 10 11"><path d="M.5 .5h9v10h-9z" fill="#c4c0b8" stroke="#8a8a8a"/><rect x="2.500" y=".5" width="5" height="4" fill="#dcdad4" stroke="#8a8a8a" stroke-width=".8"/><rect x="2.500" y="7" width="5" height="3.500" fill="#9a9a9a"/></svg></div>
  <div class="a" style="left:444px;top:110px;width:26px;height:15px;background:#d4d0c8;box-shadow:inset 1px 1px 0 #fff,inset -1px -1px 0 #606060"><svg style="left:8px;top:1px" width="10" height="12" viewBox="0 0 10 12"><path d="M3.500 0h3v1.500h3.500v1.500h-10v-1.500h3.500z" fill="#000"/><path d="M1.500 3.500h7v8.500h-7z" fill="#000"/><path d="M3.500 4.500v6M6.500 4.500v6" stroke="#d4d0c8" stroke-width="1"/></svg></div>
  <div class="t" style="right:350px;top:140px"><u>W</u>idth:</div>
  <div class="sunk" style="left:162px;top:136px;width:48px;height:18px"><div class="t tc" style="left:3px;top:3px;letter-spacing:.2px">720</div></div>
  <div class="t" style="right:350px;top:167px"><u>H</u>eight:</div>
  <div class="sunk" style="left:162px;top:163px;width:48px;height:18px"><div class="t tc" style="left:3px;top:3px;letter-spacing:.2px">576</div></div>
  <div class="sunk" style="left:222px;top:156px;width:13px;height:13px"><svg style="left:3px;top:3px" width="7" height="7" viewBox="0 0 7 7"><path d="M0 2v3l2.500 2l4.500-4.500v-2.500l-4.500 4z" fill="#000"/></svg></div>
  <div class="t" style="left:239px;top:157px">Lock Aspect Ratio to 5:4</div>
  <div class="t" style="right:350px;top:195px">Pixel <u>A</u>spect Ratio:</div>
  <div class="sunk" style="left:162px;top:191px;width:199px;height:18px"><div class="t" style="left:8px;top:4px">D1/DV PAL (1.07)</div><div class="btn" style="left:182px;top:2px;width:15px;height:14px"><svg style="left:5px;top:6px" width="5" height="3" viewBox="0 0 5 3"><path d="M0 0h5l-2.500 3z" fill="#000"/></svg></div></div>
  <div class="t" style="left:377px;top:194px">Frame Aspect</div>
  <div class="t" style="left:377px;top:206px">Ratio: 4:3</div>
  <div class="t" style="right:350px;top:224px"><u>F</u>rame Rate:</div>
  <div class="sunk" style="left:162px;top:220px;width:55px;height:18px"><div class="t tc" style="left:3px;top:3px;letter-spacing:.2px">25</div></div>
  <div class="t" style="left:225px;top:225px">Frames per second</div>
  <div class="a" style="left:27px;top:255px;width:449px;height:3px;background:linear-gradient(#808080 33%,#b4b2ae 33% 66%,#fff 66%)"></div>
  <div class="t" style="right:350px;top:274px"><u>R</u>esolution:</div>
  <div class="sunk" style="left:163px;top:270px;width:102px;height:18px"><div class="t" style="left:8px;top:4px">Full</div><div class="btn" style="left:85px;top:2px;width:15px;height:14px"><svg style="left:5px;top:6px" width="5" height="3" viewBox="0 0 5 3"><path d="M0 0h5l-2.500 3z" fill="#000"/></svg></div></div>
  <div class="t" style="left:275px;top:276px">720 x 576, 1.6 MB per 8bpc</div>
  <div class="t" style="right:350px;top:303px"><u>S</u>tart Timecode:</div>
  <div class="sunk" style="left:163px;top:299px;width:82px;height:18px"><div class="t tc" style="left:3px;top:3px">0<i>:</i>00<i>:</i>00<i>:</i>00</div></div>
  <div class="t" style="left:251px;top:305px">Base 30</div>
  <div class="t" style="right:350px;top:332px"><u>D</u>uration:</div>
  <div class="sunk" style="left:163px;top:328px;width:82px;height:18px"><div class="t tc" style="left:3px;top:3px">0<i>:</i>00<i>:</i>10<i>:</i>00</div></div>
  <div class="t" style="left:251px;top:334px">is 0:00:10:00  Base 30</div>
  <div class="a" style="left:289px;top:387px;width:95px;height:20px;background:#000"></div>
  <div class="btn" style="left:290px;top:388px;width:93px;height:18px"><div class="t" style="left:0;width:93px;text-align:center;top:3px">OK</div></div>
  <div class="btn" style="left:394px;top:387px;width:95px;height:20px"><div class="t" style="left:0;width:95px;text-align:center;top:4px">Cancel</div></div>
</div>
<!--TASKBAR-->
<div class="a" id="tb" style="left:0;top:740px;width:1024px;height:28px;background:#d4d0c8;box-shadow:inset 0 1px 0 #d4d0c8,inset 0 2px 0 #fff">
  <div class="a" style="left:2px;top:4px;width:50px;height:22px;background:#d4d0c8;box-shadow:inset 1px 1px 0 #fff,inset -1px -1px 0 #404040,inset -2px -2px 0 #808080">
    <svg style="left:3px;top:3px" width="18" height="16" viewBox="0 0 18 16"><path d="M5 2q3-2 6 0q3 2 6 0v11q-3 2-6 0q-3-2-6 0z" fill="#000"/><path d="M6 3q2.500-1.500 4.500 0v4q-2-1.500-4.500 0z" fill="#e03020"/><path d="M11.500 3.500q2.500 1.500 4.500 0v4q-2 1.500-4.500 0z" fill="#30a030"/><path d="M6 8q2.500-1.500 4.500 0v4q-2-1.500-4.500 0z" fill="#2040d0"/><path d="M11.500 8.500q2.500 1.500 4.500 0v4q-2 1.500-4.500 0z" fill="#f0d020"/><g fill="#e03020"><rect x="0" y="3" width="1" height="1"/><rect x="2" y="3" width="2" height="1"/><rect x="1" y="5" width="1" height="1"/><rect x="3" y="5" width="1" height="1"/></g><g fill="#2040d0"><rect x="0" y="8" width="1" height="1"/><rect x="2" y="8" width="2" height="1"/><rect x="1" y="10" width="1" height="1"/><rect x="3" y="10" width="1" height="1"/><rect x="0" y="12" width="1" height="1"/><rect x="2" y="12" width="2" height="1"/></g></svg>
    <svg style="left:22px;top:5px" width="12" height="12" viewBox="0 0 12 12"><path d="M1.500 2h9M.5 6h11M4.200 2v4q0 4-3.200 5.500M8 2v9.500" stroke="#000" stroke-width="1.300" fill="none"/></svg><svg style="left:35px;top:5px" width="12" height="12" viewBox="0 0 12 12"><path d="M2.800 .5l-1.800 6l4 3.500M5 3.500q-.5 5-4 8M0 5h6M9 .5l-2 4.500h4.500M10 3l1.500 2M7 7h4v4h-4z" stroke="#000" stroke-width="1.300" fill="none"/></svg>
  </div>
  <div class="a" style="left:56px;top:5px;width:2px;height:21px;background:#808080;border-right:1px solid #fff"></div>
  <div class="a" style="left:59px;top:6px;width:3px;height:19px;box-shadow:inset 1px 1px 0 #fff,inset -1px -1px 0 #808080"></div>
  <!-- quick launch -->
  <svg style="left:68px;top:9px" width="18" height="17" viewBox="0 0 18 17"><circle cx="8.500" cy="9" r="5.800" fill="none" stroke="#2a7ae8" stroke-width="3"/><path d="M3 9h11" stroke="#2a7ae8" stroke-width="2.200"/><rect x="10" y="10.200" width="6" height="2.600" fill="#d4d0c8"/><path d="M1 15q-2-5 6-10q6-4 9-2" stroke="#78b4f8" fill="none" stroke-width="1.300"/></svg>
  <svg style="left:92px;top:8px" width="17" height="18" viewBox="0 0 17 18"><rect x=".5" y="4.500" width="15" height="13" fill="#2060c0" stroke="#103070"/><path d="M3 6h10l-1 10h-8z" fill="#f8f0d0" stroke="#333" stroke-width=".8"/><rect x="5" y="8" width="5" height="5" fill="#fff" stroke="#333" stroke-width=".8"/><path d="M15.500 1l-7 9" stroke="#e04020" stroke-width="2"/><path d="M16 .5l-7 9" stroke="#f8d040" stroke-width=".8"/></svg>
  <svg style="left:116px;top:10px" width="16" height="16" viewBox="0 0 16 16"><circle cx="7.500" cy="8" r="5.500" fill="none" stroke="#108020" stroke-width="2.800"/><rect x="8" y="6.500" width="7" height="3" fill="#d4d0c8"/><circle cx="11.500" cy="10.500" r="3" fill="#fff" stroke="#108020" stroke-width="1.400"/><path d="M10 10.500h3M11.500 9v3" stroke="#108020"/></svg>
  <svg style="left:138px;top:8px" width="18" height="18" viewBox="0 0 18 18"><rect x="2" y="2" width="10" height="7" rx="2" fill="#889" stroke="#333"/><circle cx="5" cy="5" r="1.300" fill="#fff"/><circle cx="9" cy="5" r="1.300" fill="#fff"/><path d="M11 1l4 2l-3 2" fill="#30d0e0"/><rect x="2" y="9" width="10" height="8" fill="#111"/><rect x="4" y="10" width="6" height="6" fill="#e02020"/><path d="M2.500 10v7M11.500 10v7" stroke="#fff" stroke-dasharray="1 1"/><circle cx="13.500" cy="13.500" r="3" fill="#ddd" stroke="#888"/></svg>
  <div class="t sans" style="left:163px;top:4px;font-size:13px;font-weight:bold;letter-spacing:-1px;line-height:14px">»</div>
  <div class="a" style="left:174px;top:5px;width:2px;height:21px;background:#808080;border-right:1px solid #fff"></div>
  <div class="a" style="left:177px;top:6px;width:3px;height:19px;box-shadow:inset 1px 1px 0 #fff,inset -1px -1px 0 #808080"></div>
  <div class="a" style="left:186px;top:4px;width:152px;height:22px;background:#d4d0c8;box-shadow:inset 1px 1px 0 #fff,inset -1px -1px 0 #404040,inset -2px -2px 0 #808080"><svg style="left:4px;top:3px" width="17" height="16" viewBox="0 0 17 16"><rect x="1" y="5" width="11" height="10" fill="#e8e070" stroke="#3060c0"/><rect x="2" y="10" width="9" height="4" fill="#70b0f0"/><path d="M3 2h9l4 3v6l-4 2h-6z" fill="#403020"/><circle cx="11" cy="7" r="3" fill="#201810" stroke="#806040"/><path d="M4 0l3 3M8 0l-1 3" stroke="#504030" stroke-width="1.500"/></svg><div class="t sans" style="left:21px;top:5px;font-size:11px;line-height:13px;letter-spacing:-.25px">Adobe Premiere</div></div>
  <div class="a" style="left:342px;top:4px;width:153px;height:22px;background:#d4d0c8;box-shadow:inset 1px 1px 0 #fff,inset -1px -1px 0 #404040,inset -2px -2px 0 #808080"><svg style="left:4px;top:3px" width="16" height="16" viewBox="0 0 16 16"><path d="M4.500 .5h7l3 3v12h-10z" fill="#fff" stroke="#555"/><path d="M11.500 .5v3h3" fill="#ddd" stroke="#555" stroke-width=".8"/><circle cx="6" cy="8" r="4.200" fill="none" stroke="#1c4fd0" stroke-width="2.200"/><path d="M2 8h8" stroke="#1c4fd0" stroke-width="1.600"/><path d="M0 11q6-9 12-7" stroke="#3080f0" fill="none" stroke-width="1"/><rect x="7" y="8.800" width="4" height="2.500" fill="#fff"/></svg><svg style="left:22px;top:5px" width="12" height="12" viewBox="0 0 12 12"><path d="M2 3h8v5.500h-8zM2 5.700h8M6 0v10q0 1 1 1h4v-1.500" stroke="#000" stroke-width="1.1" fill="none"/></svg><svg style="left:34px;top:5px" width="12" height="12" viewBox="0 0 12 12"><path d="M6 0l-1.500 2M2 2.500h8v8.500h-8zM2 6.500h8" stroke="#000" stroke-width="1.1" fill="none"/></svg><svg style="left:46px;top:5px" width="12" height="12" viewBox="0 0 12 12"><path d="M1 11.500v-10.500h10v9.500q0 1-1.500 1M3.500 3.800h5M3.800 6h4.400v3h-4.400z" stroke="#000" stroke-width="1.1" fill="none"/></svg><svg style="left:58px;top:5px" width="12" height="12" viewBox="0 0 12 12"><path d="M7 0l-4.500 4h5.500l-6 5h7M10.500 5.500q-3 5-9 6.500" stroke="#000" stroke-width="1.1" fill="none"/></svg><svg style="left:70px;top:5px" width="12" height="12" viewBox="0 0 12 12"><path d="M1 .5l1.500 1.500M0 4h2.200v6l1.500-1.500M8 0l-4 5M8 0l4 5M6 6v4.500q0 1 1 1h4v-1.500M10.500 6.500l-4.500 2.500" stroke="#000" stroke-width="1.1" fill="none"/></svg><svg style="left:82px;top:5px" width="12" height="12" viewBox="0 0 12 12"><path d="M0 4h4.500M2.200 1v8M0 10.500l4.500-2M6 2h5.500M5 5.200h7M8 5.200l-2.200 5h5.700M9.800 8l1.700 3.500" stroke="#000" stroke-width="1.1" fill="none"/></svg><div class="t sans" style="left:99px;top:5px;font-size:11px;line-height:13px">- Microso...</div></div>
  <div class="a" style="left:499px;top:4px;width:152px;height:22px;background-color:#fff;background-image:conic-gradient(#fff 25%,#d4d0c8 0 50%,#fff 0 75%,#d4d0c8 0);background-size:2px 2px;box-shadow:inset 1px 1px 0 #404040,inset -1px -1px 0 #fff,inset 2px 2px 0 #808080,inset -2px -2px 0 #d4d0c8"><svg style="left:5px;top:4px" width="16" height="16" viewBox="0 0 16 17"><rect x=".5" y="1.500" width="15" height="15" fill="#fbe6c0" stroke="#3a6ea5"/><path d="M1 8q4-5 7-1" stroke="#fff" fill="none" stroke-width="2"/><path d="M8 2.500l3.500 13.500h-2l-.7-4h-1.600l-.7 4h-2z" fill="#d8582a"/><path d="M8 0v3M5 1.500h6" stroke="#444" stroke-width=".8"/></svg><div class="t sans" style="left:22px;top:6px;font-size:11px;line-height:13px">Adobe After Effects</div></div>
  <div class="a" style="left:655px;top:4px;width:153px;height:22px;background:#d4d0c8;box-shadow:inset 1px 1px 0 #fff,inset -1px -1px 0 #404040,inset -2px -2px 0 #808080"><svg style="left:4px;top:3px" width="16" height="16" viewBox="0 0 16 16"><rect x=".5" y="1.500" width="15" height="14" fill="#f09030" stroke="#804000"/><rect x="2" y="3" width="12" height="11" fill="#f8b060"/><path d="M3 3l8 9" stroke="#fff" stroke-width="2.500"/><path d="M3 3l8 9" stroke="#c05000" stroke-width="1"/><path d="M10 11l3 3" stroke="#333" stroke-width="2"/></svg><div class="t sans" style="left:23px;top:5px;font-size:11px;line-height:13px;letter-spacing:.3px">Image1.jpg* [1:3] : AC...</div></div>
  <!-- tray -->
  <div class="a" style="left:820px;top:4px;width:202px;height:22px;box-shadow:inset 1px 1px 0 #808080,inset -1px -1px 0 #fff">
    <svg style="left:4px;top:3px" width="16" height="16" viewBox="0 0 16 16"><path d="M1 5.500h3l4-4v13l-4-4h-3z" fill="#e8e060" stroke="#444" stroke-width="1"/><path d="M10 5l3-2M10.500 8h3.500M10 11l3 2" stroke="#999" stroke-width="1"/></svg>
    <svg style="left:22px;top:2px" width="17" height="18" viewBox="0 0 17 18"><path d="M.5 9q0-7 8-7.500q8 .5 8 7.500q-2-2-4 0q-2-2-4 0q-2-2-4 0q-2-2-4 0z" fill="#18c018" stroke="#064"/><path d="M8.500 1v14q0 2-2 2q-1.500 0-1.500-1.500" stroke="#222" fill="none" stroke-width="1.300"/></svg>
    <svg style="left:40px;top:3px" width="17" height="17" viewBox="0 0 17 17"><rect x="6" y="1" width="9" height="8" fill="#ccc" stroke="#222"/><rect x="7.500" y="2.500" width="6" height="5" fill="#224"/><rect x="1" y="6" width="9" height="7" fill="#ccc" stroke="#222"/><rect x="2.500" y="7.500" width="6" height="4" fill="#224"/><path d="M0 15.500h12M8 11h8v3h-6" stroke="#222" fill="#bbb"/></svg>
    <svg style="left:59px;top:3px" width="17" height="17" viewBox="0 0 17 17"><circle cx="7" cy="7" r="6" fill="#3878c8" stroke="#123"/><path d="M3 4q3-2 5 0t3 3q-2 3-5 1z" fill="#50b050"/><path d="M8 9l7 3l-3 4h-5z" fill="#ccc" stroke="#333" stroke-width=".8"/><circle cx="10" cy="11" r="2.500" fill="none" stroke="#223" stroke-width="1.300"/></svg>
    <svg style="left:77px;top:3px" width="16" height="17" viewBox="0 0 16 17"><circle cx="8" cy="8.500" r="7.300" fill="#f8f020" stroke="#554"/><path d="M5 13v-6q0-3 3-3t3 3v6" stroke="#a08000" fill="none" stroke-width="1.400"/><path d="M5 9.500h6" stroke="#a08000"/></svg>
    <svg style="left:95px;top:2px" width="14" height="18" viewBox="0 0 14 18"><path d="M1 2q6-2 12 0v9q-2 5-6 6.500q-4-1.500-6-6.500z" fill="#f4f4f4" stroke="#99a"/><path d="M3 4h3v2h-3zM8 4h3v2h-3zM5 7h4v2h-4zM3 10h3v2h-3zM8 10h3v2h-3z" fill="#3a8ae0"/><path d="M3 7h1.500v2h-1.500zM10 7h1v2h-1zM6 13h2v2h-2z" fill="#f0a020"/></svg>
    <svg style="left:112px;top:3px" width="17" height="16" viewBox="0 0 17 16"><rect x=".5" y=".5" width="16" height="15" fill="#fff" stroke="#000"/><path d="M12 4q-1 7-5 8q-3.500 .5-3.500-3.500t3.500-4.500q3 0 4.500 5.500q.5 2 2.500 2" stroke="#e01010" stroke-width="2.200" fill="none"/></svg>
    <div class="a" style="left:130px;top:3px;width:16px;height:16px;background:#0a1a9a"><div class="t sans" style="left:1px;top:2px;font-size:10.500px;color:#fff;letter-spacing:-.8px;line-height:13px">CH</div></div>
    <div class="t sans" style="left:161px;top:5px;font-size:11px;line-height:13px">14:09</div>
  </div>
</div>
</div>
</body></html>
